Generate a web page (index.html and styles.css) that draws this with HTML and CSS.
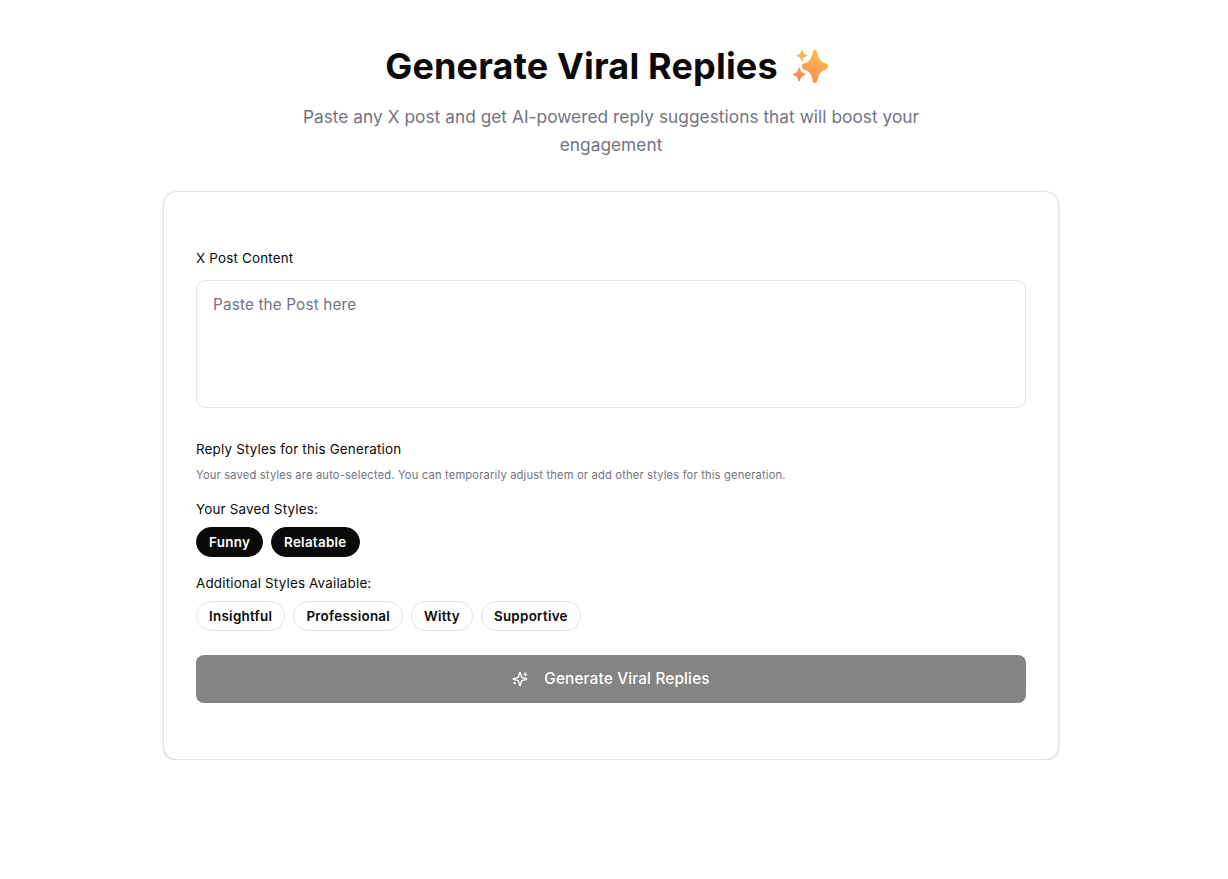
FILE: index.html
```html
<!DOCTYPE html>
<html lang="en">
<head>
<meta charset="utf-8">
<title>Generate Viral Replies</title>
<link rel="stylesheet" href="styles.css">
</head>
<body>
<main class="page">
  <header class="hero">
    <h1 class="title">Generate Viral Replies
      <svg class="sparkles" viewBox="0 0 38 36" width="38" height="36" aria-hidden="true">
        <defs>
          <linearGradient id="gmain" x1="0.7" y1="0" x2="0.35" y2="1">
            <stop offset="0" stop-color="#ffc04a"/>
            <stop offset="1" stop-color="#ff8a55"/>
          </linearGradient>
          <linearGradient id="gsmall" x1="0.7" y1="0" x2="0.3" y2="1">
            <stop offset="0" stop-color="#ffa055"/>
            <stop offset="1" stop-color="#fb7a63"/>
          </linearGradient>
        </defs>
        <path fill="url(#gmain)" d="M22 2C23.500 2 24.200 3.500 24.600 5.500C25.600 10.800 27.800 14 33 15.600C34.800 16.200 35 17.400 35 18.500C35 19.600 34.800 20.800 33 21.400C27.800 23 25.600 26.200 24.600 31.500C24.200 33.500 23.500 35 22 35C20.500 35 19.800 33.500 19.400 31.500C18.400 26.200 16.200 23 11 21.400C9.200 20.800 9 19.600 9 18.500C9 17.400 9.200 16.200 11 15.600C16.200 14 18.400 10.800 19.400 5.500C19.800 3.500 20.500 2 22 2Z"/>
        <path fill="#fdb35a" transform="translate(1.500 1)" d="M7.500 1C8 1 8.200 1.600 8.400 2.300C8.900 4.300 9.800 5.200 11.700 5.700C12.500 5.900 13 6.100 13 6.600C13 7.100 12.500 7.300 11.700 7.500C9.800 8 8.900 8.900 8.400 10.900C8.200 11.600 8 12.200 7.500 12.200C7 12.200 6.800 11.600 6.600 10.900C6.100 8.900 5.200 8 3.300 7.500C2.500 7.300 2 7.100 2 6.600C2 6.100 2.500 5.900 3.300 5.700C5.200 5.200 6.100 4.300 6.600 2.300C6.800 1.600 7 1 7.500 1Z"/>
        <path fill="url(#gsmall)" d="M6.200 19.500C6.800 19.500 7 20.200 7.200 21.100C7.800 23.600 8.900 24.800 11.300 25.400C12.200 25.600 12.600 25.900 12.600 26.400C12.600 26.900 12.200 27.200 11.300 27.400C8.900 28 7.800 29.200 7.200 31.700C7 32.600 6.800 33.300 6.200 33.300C5.600 33.300 5.400 32.600 5.200 31.700C4.600 29.200 3.500 28 1.100 27.400C0.400 27.200 0 26.900 0 26.400C0 25.900 0.400 25.600 1.100 25.400C3.500 24.800 4.600 23.600 5.200 21.100C5.400 20.200 5.600 19.500 6.200 19.500Z"/>
      </svg>
    </h1>
    <p class="subtitle">Paste any X post and get AI-powered reply suggestions that will boost your engagement</p>
  </header>

  <section class="card">
    <label class="label" for="post">X Post Content</label>
    <textarea class="post-input" id="post" placeholder="Paste the Post here"></textarea>

    <h2 class="label styles-heading">Reply Styles for this Generation</h2>
    <p class="hint">Your saved styles are auto-selected. You can temporarily adjust them or add other styles for this generation.</p>

    <h3 class="label group-label">Your Saved Styles:</h3>
    <div class="chips">
      <button class="chip chip-on">Funny</button>
      <button class="chip chip-on">Relatable</button>
    </div>

    <h3 class="label group-label">Additional Styles Available:</h3>
    <div class="chips">
      <button class="chip">Insightful</button>
      <button class="chip">Professional</button>
      <button class="chip">Witty</button>
      <button class="chip">Supportive</button>
    </div>

    <button class="submit" disabled>
      <svg class="submit-icon" viewBox="0 0 24 24" width="16" height="16" fill="none" stroke="currentColor" stroke-width="2" stroke-linecap="round" stroke-linejoin="round" aria-hidden="true">
        <path d="M9.937 15.500A2 2 0 0 0 8.500 14.063l-6.135-1.582a.5.5 0 0 1 0-.962L8.500 9.936A2 2 0 0 0 9.937 8.500l1.582-6.135a.5.5 0 0 1 .963 0L14.063 8.500A2 2 0 0 0 15.500 9.937l6.135 1.581a.5.5 0 0 1 0 .964L15.500 14.063a2 2 0 0 0-1.437 1.437l-1.582 6.135a.5.5 0 0 1-.963 0z"/>
        <path d="M20 3v4M22 5h-4M4 17v2M5 18H3"/>
      </svg>
      <span>Generate Viral Replies</span>
    </button>
  </section>
</main>
</body>
</html>
```
FILE: styles.css
```css
* { box-sizing: border-box; }
html, body { margin: 0; padding: 0; background: #fff; }
body {
  font-family: Inter, "Liberation Sans", sans-serif;
  color: #0a0a0a;
  padding-right: 6px;
}
.page {
  width: 896px;
  margin: 0 auto;
  padding-top: 44px;
}
.hero { text-align: center; margin-bottom: 32px; }
.title {
  margin: 0;
  padding-right: 6px;
  font-size: 36px;
  line-height: 44px;
  font-weight: 700;
  letter-spacing: 0.18px;
  display: flex;
  justify-content: center;
  align-items: center;
  gap: 15px;
}
.sparkles { display: block; }
.subtitle {
  width: 672px;
  margin: 15px auto 0;
  font-size: 17.3px;
  line-height: 28px;
  color: #737380;
  letter-spacing: 0.03px;
}
.card {
  display: flex;
  flex-direction: column;
  align-items: stretch;
  height: 569px;
  padding: 56px 32px 0;
  background: #fff;
  border: 1px solid #e5e5e5;
  border-radius: 14px;
  box-shadow: 0 1px 3px rgba(0,0,0,.12), 0 1px 2px -1px rgba(0,0,0,.12);
}
.label {
  display: block;
  margin: 0;
  font-size: 13.4px;
  line-height: 20px;
  font-weight: 440;
  letter-spacing: 0.19px;
  color: #0a0a0a;
}
.post-input {
  display: block;
  height: 128px;
  margin-top: 12px;
  padding: 12px 16px;
  border: 1px solid #e5e5e5;
  border-radius: 10px;
  font: 400 15.3px/24px Inter, "Liberation Sans", sans-serif;
  letter-spacing: 0.15px;
  color: #0a0a0a;
  background: #fff;
  resize: none;
  outline: none;
}
.post-input::placeholder { color: #737380; opacity: 1; }
.styles-heading { margin-top: 31px; }
.hint {
  margin: 8px 0 0;
  font-size: 11.2px;
  line-height: 16px;
  letter-spacing: 0.16px;
  color: #737380;
}
.group-label { margin-top: 16px; }
.chips {
  display: flex;
  gap: 8px;
  margin-top: 8px;
}
.chip {
  height: 30px;
  padding: 0 12px;
  border: 1px solid #e5e5e5;
  border-radius: 999px;
  background: #fff;
  color: #0a0a0a;
  font: 600 13.4px/20px Inter, "Liberation Sans", sans-serif;
  letter-spacing: 0.28px;
}
.chip-on {
  background: #0a0a0a;
  border-color: #0a0a0a;
  color: #fff;
}
.submit {
  display: flex;
  align-items: center;
  justify-content: center;
  gap: 16px;
  height: 48px;
  margin-top: 24px;
  border: 0;
  border-radius: 8px;
  background: #848484;
  color: #fff;
  font: 500 15.3px/24px Inter, "Liberation Sans", sans-serif;
  letter-spacing: 0.18px;
}
.submit-icon { display: block; }
```
